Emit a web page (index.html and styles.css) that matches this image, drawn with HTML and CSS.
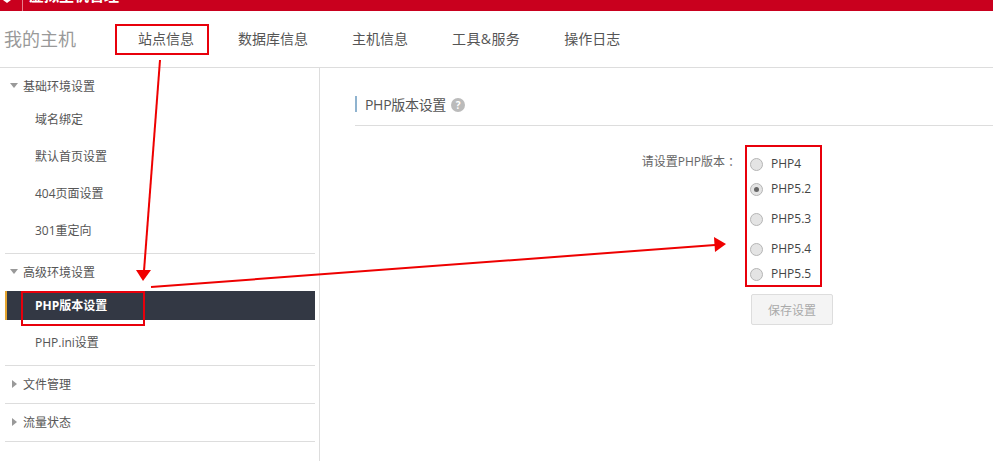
FILE: index.html
```html
<!DOCTYPE html>
<html lang="zh-CN">

<head>
    <meta charset="UTF-8">
    <title>我的主机</title>
    <link rel="stylesheet" href="styles.css">
</head>

<body>
    <div class="topbar">
        <svg class="top-logo" width="8" height="3" viewBox="0 0 8 3">
            <path d="M0 0h8L4 3z" fill="#fff"/>
        </svg>
        <span class="top-sep"></span>
        <span class="top-title">虚拟主机管理</span>
    </div>

    <header class="head">
        <div class="brand">我的主机</div>
        <nav class="tabs">
            <a class="tab tab-first" href="#site">站点信息</a>
            <a class="tab" href="#db">数据库信息</a>
            <a class="tab" href="#host">主机信息</a>
            <a class="tab tab-tools" href="#tools">工具&amp;服务</a>
            <a class="tab" href="#log">操作日志</a>
        </nav>
    </header>

    <div class="main">
        <aside class="side">
            <div class="group">
                <div class="group-head"><span class="caret-down"></span>基础环境设置</div>
                <a class="item" href="#a">域名绑定</a>
                <a class="item" href="#b">默认首页设置</a>
                <a class="item" href="#c">404页面设置</a>
                <a class="item" href="#d">301重定向</a>
            </div>
            <div class="group">
                <div class="group-head"><span class="caret-down"></span>高级环境设置</div>
                <a class="item active" href="#e">PHP版本设置</a>
                <a class="item" href="#f">PHP.ini设置</a>
            </div>
            <div class="group">
                <div class="group-head"><span class="caret-right"></span>文件管理</div>
            </div>
            <div class="group">
                <div class="group-head"><span class="caret-right"></span>流量状态</div>
            </div>
        </aside>

        <section class="content">
            <div class="title-row">
                <h2 class="title">PHP版本设置</h2>
                <span class="help">?</span>
            </div>
            <form class="php-form">
                <div class="form-label">请设置PHP版本<span class="colon">：</span></div>
                <div class="form-body">
                    <label class="radio r1"><span class="dot"></span>PHP4</label>
                    <label class="radio r2"><span class="dot checked"></span>PHP5.2</label>
                    <label class="radio r3"><span class="dot"></span>PHP5.3</label>
                    <label class="radio r3"><span class="dot"></span>PHP5.4</label>
                    <label class="radio r4"><span class="dot"></span>PHP5.5</label>
                    <button class="save" type="button">保存设置</button>
                </div>
            </form>
        </section>
    </div>

    <!-- red marks drawn on top of the screenshot -->
    <div class="mark mark-tab"></div>
    <div class="mark mark-item"></div>
    <div class="mark mark-radios"></div>
    <svg class="arrows" width="993" height="461" viewBox="0 0 993 461">
        <path d="M160 60 144 271" stroke="#ee0000" stroke-width="2" fill="none"/>
        <path d="M136 270h15l-8 11z" fill="#f00000"/>
        <path d="M151 287 715 245" stroke="#ee0000" stroke-width="2" fill="none"/>
        <path d="M714 237 726 244 715 252z" fill="#f00000"/>
    </svg>
</body>

</html>
```

FILE: styles.css
```css
* {
    box-sizing: border-box;
}

body {
    margin: 0;
    height: 461px;
    overflow: hidden;
    position: relative;
    background: #fff;
    color: #444;
    font-family: "Open Sans", "Noto Sans CJK SC", sans-serif;
    font-size: 12px;
}

a {
    color: inherit;
    text-decoration: none;
}

.topbar {
    height: 11px;
    background: #c9001e;
    display: flex;
    overflow: hidden;
    color: #fff;
}

.top-logo {
    margin-left: 3px;
    flex: none;
}

.top-sep {
    width: 1px;
    height: 11px;
    margin-left: 11px;
    background: #e8808f;
}

.top-title {
    margin-left: 6px;
    margin-top: -13px;
    font-size: 15px;
    line-height: 16px;
    font-weight: bold;
}

.head {
    height: 57px;
    display: flex;
    align-items: center;
    border-bottom: 1px solid #ddd;
    padding-bottom: 2px;
}

.brand {
    width: 116px;
    padding-left: 4px;
    font-size: 18px;
    color: #999;
}

.tabs {
    display: flex;
}

.tab {
    font-size: 14px;
    color: #555;
    margin-right: 44px;
}

.tab-first {
    margin-left: 22px;
}

.tab-tools {
    letter-spacing: 0.4px;
}

.main {
    display: flex;
    height: 393px;
}

.side {
    width: 320px;
    flex: none;
    padding: 0 4px 0 5px;
    border-right: 1px solid #ddd;
}

.group {
    border-bottom: 1px solid #ddd;
}

.group-head {
    height: 37px;
    display: flex;
    align-items: center;
    padding: 0 0 2px 5px;
    color: #555;
}

.caret-down {
    width: 0;
    height: 0;
    margin-right: 5px;
    border: 4px solid transparent;
    border-top: 5px solid #999;
    border-bottom: 0;
}

.caret-right {
    width: 0;
    height: 0;
    margin: 0 6px 0 2px;
    border: 4px solid transparent;
    border-left: 5px solid #999;
    border-right: 0;
}

.item {
    display: block;
    height: 29px;
    line-height: 29px;
    margin-bottom: 8px;
    padding-left: 30px;
    color: #555;
}

.item.active {
    background: #333844;
    border-left: 2px solid #e5a52f;
    padding-left: 28px;
    color: #fff;
    font-weight: bold;
}

.content {
    flex: 1;
    padding: 28px 0 0 35px;
}

.title-row {
    display: flex;
    height: 30px;
    border-bottom: 1px solid #ddd;
    align-items: flex-start;
}

.title {
    margin: 0;
    height: 16px;
    line-height: 17px;
    padding-left: 8px;
    border-left: 2px solid #8fb3cf;
    font-size: 14px;
    font-weight: normal;
    letter-spacing: -0.3px;
    color: #555;
}

.help {
    width: 14px;
    height: 14px;
    margin: 2px 0 0 5px;
    border-radius: 50%;
    background: #bbb;
    color: #fff;
    font-size: 10px;
    font-weight: bold;
    line-height: 14px;
    text-align: center;
}

.php-form {
    display: flex;
    padding-top: 27px;
}

.form-label {
    width: 385px;
    text-align: right;
    color: #666;
    line-height: 18px;
}

.colon {
    margin-left: 3px;
}

.form-body {
    padding: 1px 0 0 10px;
}

.radio {
    display: flex;
    align-items: center;
    height: 18px;
    color: #444;
}

.r2 {
    margin-top: 7px;
}

.r3 {
    margin-top: 12px;
}

.r4 {
    margin-top: 7px;
}

.dot {
    width: 13px;
    height: 13px;
    margin: 2px 8px 0 0;
    border: 1px solid #b5b5b5;
    border-radius: 50%;
    background: #e4e4e4;
    display: flex;
    align-items: center;
    justify-content: center;
}

.dot.checked::after {
    content: "";
    width: 5px;
    height: 5px;
    border-radius: 50%;
    background: #666;
}

.save {
    display: block;
    width: 82px;
    height: 31px;
    margin: 12px 0 0 1px;
    background: #f4f4f4;
    border: 1px solid #ddd;
    border-radius: 2px;
    color: #aaa;
    font: inherit;
}

.mark {
    position: absolute;
    border: 2px solid #e8000b;
}

.mark-tab {
    left: 115px;
    top: 24px;
    width: 94px;
    height: 31px;
}

.mark-item {
    left: 21px;
    top: 291px;
    width: 124px;
    height: 35px;
}

.mark-radios {
    left: 745px;
    top: 145px;
    width: 77px;
    height: 142px;
}

.arrows {
    position: absolute;
    left: 0;
    top: 0;
}
```
